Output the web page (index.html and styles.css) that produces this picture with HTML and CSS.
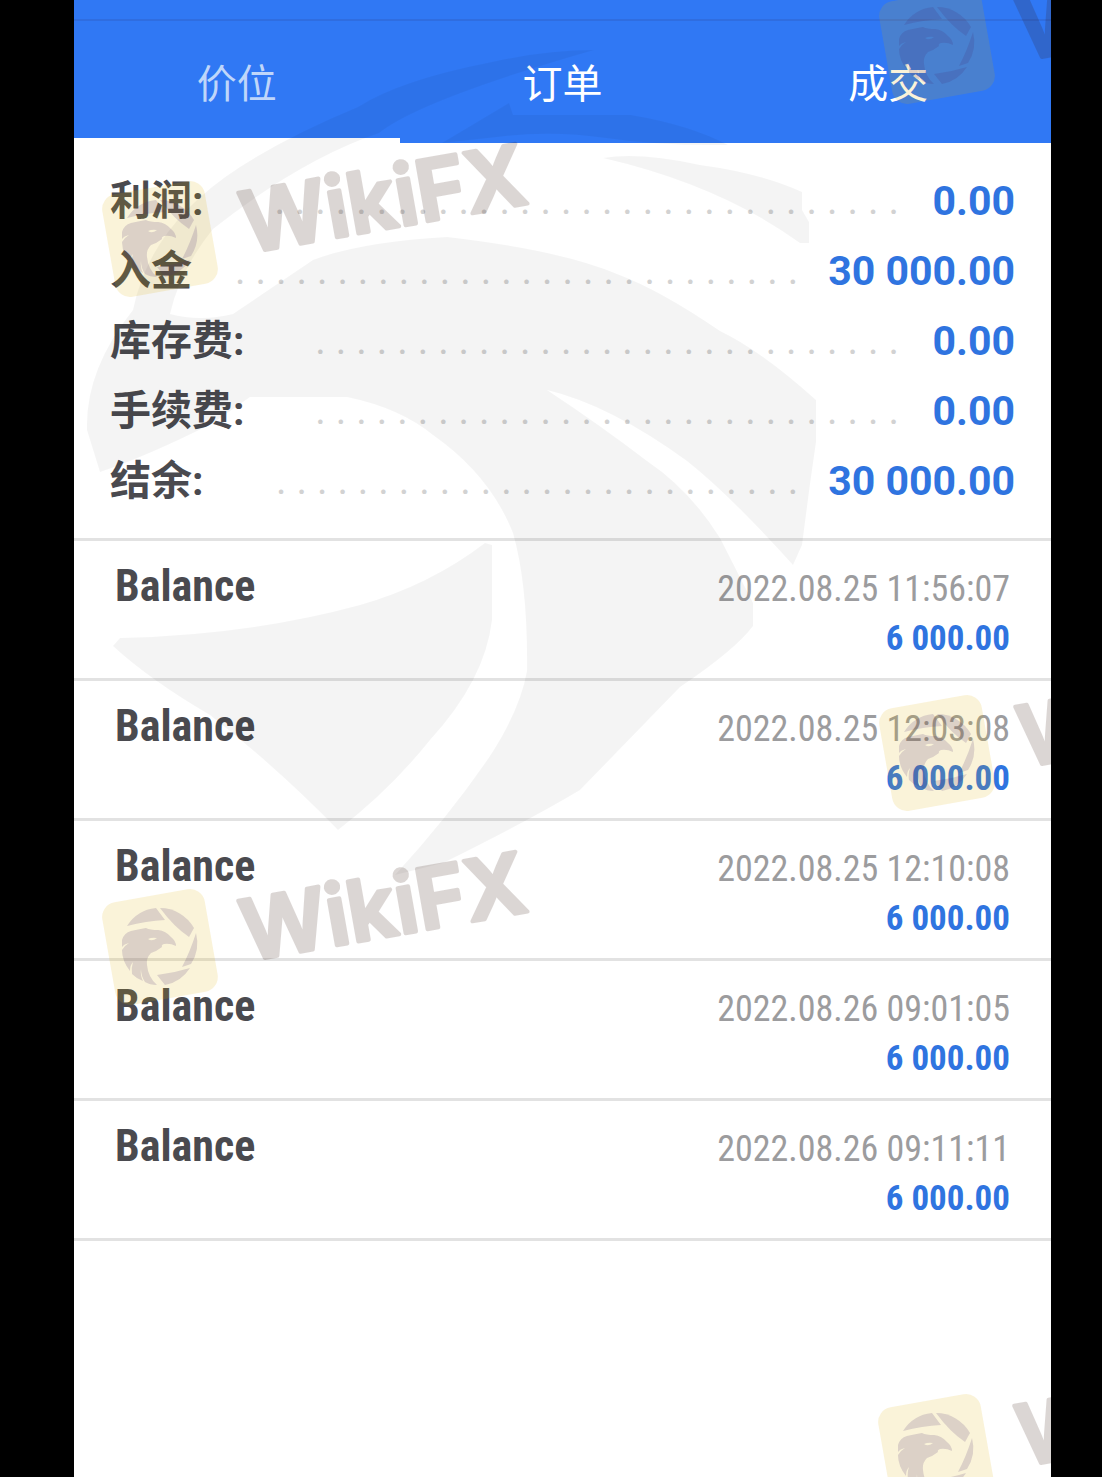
FILE: index.html
```
<!DOCTYPE html>
<html lang="zh-CN">
<head>
  <meta charset="UTF-8" />
  <meta name="viewport" content="width=device-width, initial-scale=1.0" />
  <title>历史</title>
  <link rel="stylesheet" href="styles.css">
</head>
<body>
  <div class="screen">
    <header class="topbar">
      <div class="statusbar"></div>
      <nav class="tabs">
        <a href="#price" class="tab active">价位</a>
        <a href="#orders" class="tab">订单</a>
        <a href="#deals" class="tab">成交</a>
      </nav>
    </header>

    <main>
      <section class="summary">
        <div class="row"><span class="label">利润:</span><span class="dots" aria-hidden="true">. . . . . . . . . . . . . . . . . . . . . . . . . . . . . . .</span><span class="value">0.00</span></div>
        <div class="row"><span class="label">入金</span><span class="dots" aria-hidden="true">. . . . . . . . . . . . . . . . . . . . . . . . . . . .</span><span class="value">30 000.00</span></div>
        <div class="row"><span class="label">库存费:</span><span class="dots" aria-hidden="true">. . . . . . . . . . . . . . . . . . . . . . . . . . . . .</span><span class="value">0.00</span></div>
        <div class="row"><span class="label">手续费:</span><span class="dots" aria-hidden="true">. . . . . . . . . . . . . . . . . . . . . . . . . . . . .</span><span class="value">0.00</span></div>
        <div class="row"><span class="label">结余:</span><span class="dots" aria-hidden="true">. . . . . . . . . . . . . . . . . . . . . . . . . .</span><span class="value">30 000.00</span></div>
      </section>

      <ul class="records">
        <li class="record">
          <span class="type">Balance</span>
          <div class="detail"><time>2022.08.25 11:56:07</time><span class="amount">6 000.00</span></div>
        </li>
        <li class="record">
          <span class="type">Balance</span>
          <div class="detail"><time>2022.08.25 12:03:08</time><span class="amount">6 000.00</span></div>
        </li>
        <li class="record">
          <span class="type">Balance</span>
          <div class="detail"><time>2022.08.25 12:10:08</time><span class="amount">6 000.00</span></div>
        </li>
        <li class="record">
          <span class="type">Balance</span>
          <div class="detail"><time>2022.08.26 09:01:05</time><span class="amount">6 000.00</span></div>
        </li>
        <li class="record">
          <span class="type">Balance</span>
          <div class="detail"><time>2022.08.26 09:11:11</time><span class="amount">6 000.00</span></div>
        </li>
      </ul>
    </main>

    <!-- watermark layer -->
    <svg class="watermark" viewBox="74 0 977 1477" preserveAspectRatio="xMinYMin slice" aria-hidden="true">
      <defs>
        <g id="brand">
          <rect class="badge" x="-52" y="-52" width="104" height="104" rx="15" transform="rotate(-10)" />
          <g class="eagle">
            <path d="M-33-21A39 39 0 0 1-4-39L5-27Q-14-26-33-21Z" />
            <path d="M0-39A39 39 0 0 1 34-19L29-10Q14-20 0-39Z" />
            <path d="M36-14A39 39 0 0 1 31 17L22 20Q30 5 36-14Z" />
            <path d="M30 21A38 38 0 0 1 5 38L-3 28Q14 26 30 21Z" />
            <path fill-rule="evenodd" d="M-38-7Q-36-14-29-16Q-20-18-14-19Q-10-17-2-17Q6-16 11-10Q16-6 16-1Q10-4 4-3Q1-2 2 0Q-3 4-9 6Q-14 11-13 18Q-12 30-3 38Q-10 38-15 35Q-19 29-19 22Q-20 28-17 34Q-23 32-28 27Q-29 21-27 15Q-30 18-30 24Q-38 14-38 3Q-36-1-31-4Q-36-3-38 0ZM-12-8Q-8-5-3-9Q-8-10-12-8Z" />
          </g>
          <text class="brand-name" x="83" y="29" transform="rotate(-10)">WikiFX</text>
        </g>
      </defs>
      <g class="bird">
        <path d="M594 50Q545 50 492 62Q400 80 358 107Q290 135 240 167Q150 225 133 310Q85 370 87 430L100 472Q150 455 213 423L250 397H347Q400 408 433 435Q490 475 513 533Q528 586 527 671Q520 710 490 756Q450 815 395 875L443 863Q530 820 580 790L680 687Q735 650 753 626V603L720 538Q690 490 647 461Q600 425 547 390Q610 405 687 461Q730 495 793 565L802 545L810 484L816 442V400Q760 350 720 331Q660 290 617 274Q560 250 447 237Q360 242 313 260L233 314Q200 322 170 314Q180 270 213 229Q300 160 379 133Q420 100 594 50Z" />
        <path d="M603 158Q640 152 700 165Q760 173 802 192V210L809 222V243H800Q720 185 603 158Z" />
        <path d="M509 103L513 115H631Q690 125 728 145Q660 146 606 138Q550 130 497 137L442 143Z" />
        <path d="M113 646L120 638Q250 635 360 605Q430 585 485 543L492 545V620Q485 680 430 740Q390 790 338 830Q280 770 210 715Q150 680 113 646Z" />
      </g>
      <use href="#brand" x="160" y="239" />
      <use href="#brand" x="937" y="46" />
      <use href="#brand" x="160" y="947" />
      <use href="#brand" x="937" y="753" />
      <use href="#brand" x="936" y="1452" />
    </svg>
  </div>
</body>
</html>
```
FILE: styles.css
```
* {
  box-sizing: border-box;
}

body {
  margin: 0;
  padding: 0 51px 0 74px;
  background-color: #000;
  font-family: Roboto, "Noto Sans CJK SC", sans-serif;
  color: #4a4a4f;
}

.screen {
  position: relative;
  min-height: 100vh;
  background-color: #fff;
  overflow: hidden;
}

.topbar {
  background-color: #3078f4;
}

.statusbar {
  height: 21px;
  border-bottom: 2px solid #2f6de0;
}

.tabs {
  display: grid;
  grid-template-columns: repeat(3, 1fr);
}

.tab {
  height: 122px;
  line-height: 128px;
  text-align: center;
  font-size: 40px;
  color: #fff;
  text-decoration: none;
}

.tab.active {
  border-bottom: 5px solid #fff;
  color: #bfd6fa;
}

.summary {
  padding: 23px 36px 22px;
  border-bottom: 3px solid #e2e2e2;
}

.row {
  display: flex;
  height: 70px;
  line-height: 70px;
  font-size: 40px;
  white-space: nowrap;
}

.label {
  font-size: 41px;
  line-height: 70px;
  font-weight: bold;
}

.dots {
  flex: 1;
  overflow: hidden;
  text-align: right;
  color: #d2d2d2;
}

.value {
  min-width: 116px;
  padding-left: 30px;
  text-align: right;
  font-size: 41px;
  font-weight: bold;
  color: #2f74e0;
}

.records {
  margin: 0;
  padding: 0;
  list-style: none;
}

.record {
  display: flex;
  justify-content: space-between;
  height: 140px;
  padding: 20px 41px 0;
  border-bottom: 3px solid #e2e2e2;
  font-family: "Roboto Condensed", "Liberation Sans Narrow", Roboto, sans-serif;
  line-height: 50px;
}

.type {
  font-size: 44px;
  font-weight: bold;
}

.detail {
  display: flex;
  flex-direction: column;
  align-items: flex-end;
  padding-top: 3px;
}

.detail time {
  font-size: 36px;
  color: #9c9c9e;
}

.amount {
  font-size: 35px;
  font-weight: bold;
  color: #2f74e0;
}

.watermark {
  position: absolute;
  top: 0;
  left: 0;
  width: 100%;
  height: 100%;
  pointer-events: none;
}

.bird {
  fill: #000;
  fill-opacity: 0.042;
}

.badge {
  fill: #dcae00;
  fill-opacity: 0.15;
}

.eagle {
  fill: #46286e;
  fill-opacity: 0.17;
}

.brand-name {
  font-family: Inter, "Open Sans", sans-serif;
  font-size: 84px;
  font-weight: 600;
  fill: #32140a;
  stroke: #32140a;
  stroke-width: 4px;
  stroke-linejoin: round;
  opacity: 0.17;
}
```
